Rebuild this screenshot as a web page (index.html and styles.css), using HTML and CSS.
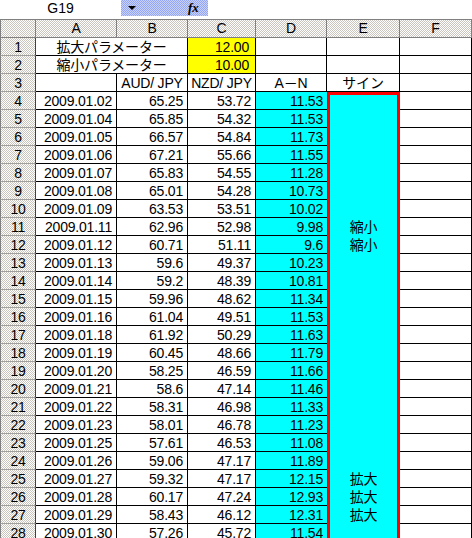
FILE: index.html
```html
<!DOCTYPE html>
<html>
<head>
<meta charset="utf-8">
<link rel="stylesheet" href="styles.css">
</head>
<body>
<div class="sheet">
  <div class="fbar">
    <div class="namebox">G19</div>
    <div class="fxzone"><span class="arrow"></span><span class="fx">fx</span></div>
    <div class="formula"></div>
  </div>
  <div class="strip"></div>
  <div class="row hdr">
    <div class="c rh"></div>
    <div class="c ca ch">A</div>
    <div class="c cb ch">B</div>
    <div class="c cc ch">C</div>
    <div class="c cd ch">D</div>
    <div class="c ce ch">E</div>
    <div class="c cf ch">F</div>
  </div>
  <div class="row">
    <div class="c rh">1</div>
    <div class="c cab ctr">拡大パラメーター</div>
    <div class="c cc num yel">12.00</div>
    <div class="c cd"></div>
    <div class="c ce"></div>
    <div class="c cf"></div>
  </div>
  <div class="row">
    <div class="c rh">2</div>
    <div class="c cab ctr">縮小パラメーター</div>
    <div class="c cc num yel">10.00</div>
    <div class="c cd"></div>
    <div class="c ce"></div>
    <div class="c cf"></div>
  </div>
  <div class="row">
    <div class="c rh">3</div>
    <div class="c ca"></div>
    <div class="c cb ctr">AUD/ JPY</div>
    <div class="c cc ctr">NZD/ JPY</div>
    <div class="c cd ctr">A－N</div>
    <div class="c ce ctr">サイン</div>
    <div class="c cf"></div>
  </div>
  <div id="data"></div>
</div>
<script src="app.js"></script>
</body>
</html>
```
FILE: app.js
```js
const rows = [
  [4,"2009.01.02","65.25","53.72","11.53",""],
  [5,"2009.01.04","65.85","54.32","11.53",""],
  [6,"2009.01.05","66.57","54.84","11.73",""],
  [7,"2009.01.06","67.21","55.66","11.55",""],
  [8,"2009.01.07","65.83","54.55","11.28",""],
  [9,"2009.01.08","65.01","54.28","10.73",""],
  [10,"2009.01.09","63.53","53.51","10.02",""],
  [11,"2009.01.11","62.96","52.98","9.98","縮小"],
  [12,"2009.01.12","60.71","51.11","9.6","縮小"],
  [13,"2009.01.13","59.6","49.37","10.23",""],
  [14,"2009.01.14","59.2","48.39","10.81",""],
  [15,"2009.01.15","59.96","48.62","11.34",""],
  [16,"2009.01.16","61.04","49.51","11.53",""],
  [17,"2009.01.18","61.92","50.29","11.63",""],
  [18,"2009.01.19","60.45","48.66","11.79",""],
  [19,"2009.01.20","58.25","46.59","11.66",""],
  [20,"2009.01.21","58.6","47.14","11.46",""],
  [21,"2009.01.22","58.31","46.98","11.33",""],
  [22,"2009.01.23","58.01","46.78","11.23",""],
  [23,"2009.01.25","57.61","46.53","11.08",""],
  [24,"2009.01.26","59.06","47.17","11.89",""],
  [25,"2009.01.27","59.32","47.17","12.15","拡大"],
  [26,"2009.01.28","60.17","47.24","12.93","拡大"],
  [27,"2009.01.29","58.43","46.12","12.31","拡大"],
  [28,"2009.01.30","57.26","45.72","11.54",""]
];
const host = document.getElementById("data");
rows.forEach((r, i) => {
  const row = document.createElement("div");
  row.className = "row";
  row.innerHTML =
    '<div class="c rh">' + r[0] + '</div>' +
    '<div class="c ca num">' + r[1] + '</div>' +
    '<div class="c cb num">' + r[2] + '</div>' +
    '<div class="c cc num">' + r[3] + '</div>' +
    '<div class="c cd num cyan dd">' + r[4] + '</div>' +
    '<div class="c ce ctr cyan sig' + (i === 0 ? ' sigtop' : '') + '">' + r[5] + '</div>' +
    '<div class="c cf"></div>';
  host.appendChild(row);
});
```
FILE: styles.css
```css
html, body {
  margin: 0;
  padding: 0;
  background: #fff;
}
.sheet {
  width: 472px;
  height: 538px;
  overflow: hidden;
  font-family: "Liberation Sans", "Noto Sans CJK JP", sans-serif;
  font-size: 14px;
  color: #000;
}
.fbar {
  display: flex;
  height: 16px;
}
.namebox {
  width: 121px;
  text-align: center;
  font-size: 14px;
  line-height: 16px;
  background: #fff;
}
.fxzone {
  width: 87px;
  background: repeating-conic-gradient(#94a6f2 0 25%, #c9d2fa 0 50%) 0 0 / 2px 2px;
  position: relative;
}
.arrow {
  position: absolute;
  left: 7px;
  top: 6px;
  width: 0;
  height: 0;
  border-left: 4px solid transparent;
  border-right: 4px solid transparent;
  border-top: 4px solid #000;
}
.fx {
  position: absolute;
  left: 67px;
  top: 0;
  font-family: "Liberation Serif", serif;
  font-style: italic;
  font-weight: bold;
  font-size: 13px;
  line-height: 16px;
}
.formula {
  flex: 1;
}
.strip {
  height: 3px;
  background: #fff;
}
.row {
  display: flex;
  height: 18px;
}
.c {
  box-sizing: border-box;
  height: 18px;
  border-right: 1px solid #000;
  border-bottom: 1px solid #000;
  line-height: 15px;
  padding-top: 2px;
  white-space: nowrap;
  overflow: hidden;
  letter-spacing: -0.2px;
}
.hdr {
  height: 19px;
}
.hdr .c {
  height: 19px;
  border-top: 1px solid #808080;
  border-bottom: 1px solid #808080;
  border-right: 1px solid #808080;
  background: repeating-conic-gradient(#c9c5bc 0 25%, #fff 0 50%) 0 0 / 2px 2px;
  text-align: center;
  padding-top: 1px;
}
.rh {
  width: 36px;
  border-left: 1px solid #808080;
  border-right: 1px solid #404040;
  border-bottom: 1px solid #a0a0a0;
  background: repeating-conic-gradient(#c9c5bc 0 25%, #fff 0 50%) 0 0 / 2px 2px;
  text-align: center;
}
.ca { width: 81px; }
.cb { width: 71px; }
.cab { width: 152px; }
.cc { width: 68px; }
.cd { width: 71px; }
.ce { width: 73px; }
.cf { width: 72px; }
.num {
  text-align: right;
  padding-right: 4px;
}
.ctr {
  text-align: center;
}
.yel {
  background: #ffff00;
  padding-right: 6px;
}
.cyan {
  background: #00ffff;
}
.dd {
  border-right: none;
}
.sig {
  border-left: 3px solid #ff0000;
  border-right: 3px solid #ff0000;
  border-bottom: none;
}
.sigtop {
  border-top: 3px solid #ff0000;
  padding-top: 0;
}
```
